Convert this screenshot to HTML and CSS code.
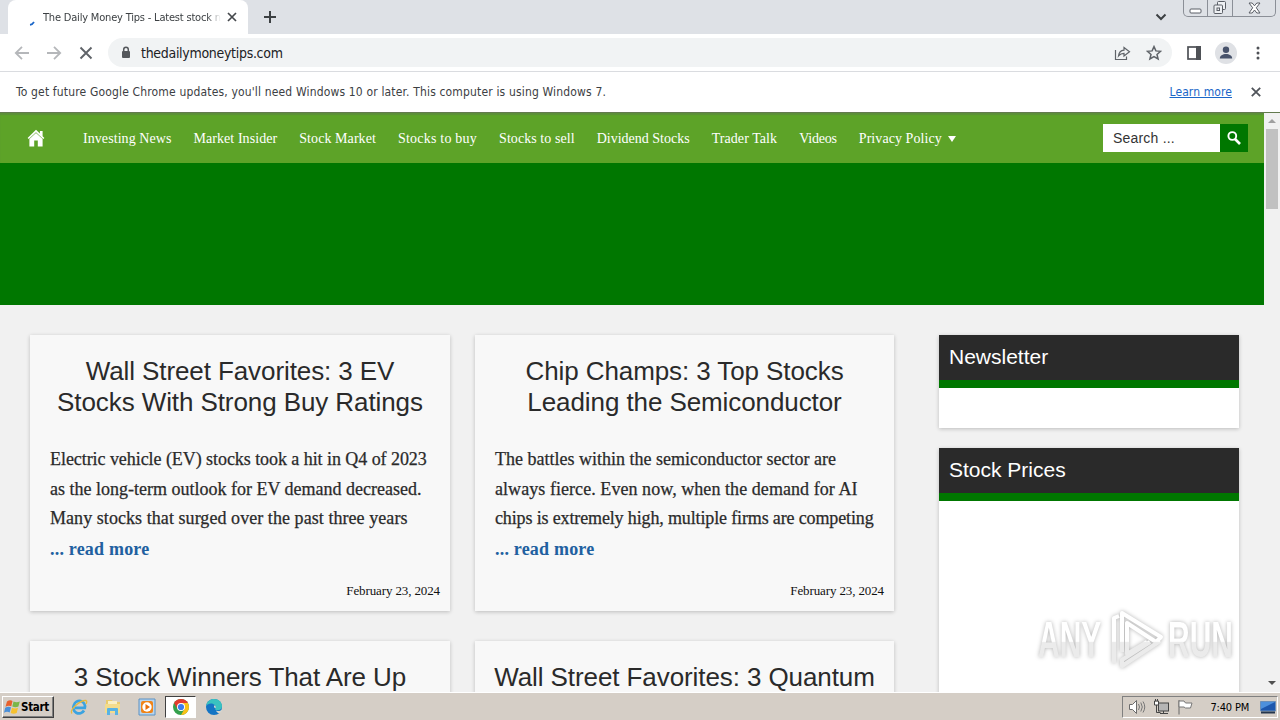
FILE: index.html
```
<!DOCTYPE html>
<html lang="en">
<head>
<meta charset="utf-8">
<title>The Daily Money Tips - Latest stock news</title>
<link rel="stylesheet" href="styles.css">
</head>
<body>
<div class="screen">
    <div class="tabstrip">
        <div class="tab">
            <svg class="spinner" width="16" height="16" viewBox="0 0 16 16"><path d="M6 11.800Q8.500 11.500 10 9" fill="none" stroke="#1a66c8" stroke-width="1.700"/></svg>
            <span class="tab-title">The Daily Money Tips - Latest stock n</span>
            <svg width="10" height="10" viewBox="0 0 10 10"><path d="M1 1l8 8M9 1l-8 8" stroke="#45484c" stroke-width="1.7"/></svg>
        </div>
        <svg class="newtab" width="12" height="12" viewBox="0 0 12 12"><path d="M6 0v12M0 6h12" stroke="#3c4043" stroke-width="2"/></svg>
        <svg class="chevron" width="12" height="8" viewBox="0 0 12 8"><path d="M1.500 1.500L6 6l4.500-4.500" fill="none" stroke="#3c4043" stroke-width="2"/></svg>
        <div class="winbtns">
            <span class="winbtn"><svg width="13" height="6" viewBox="0 0 13 6"><rect x="1" y="1" width="11" height="4" rx="1" fill="#fff" stroke="#5a5e66"/></svg></span>
            <span class="winbtn"><svg width="14" height="14" viewBox="0 0 14 14"><g fill="#eef0f3" stroke="#5a5e66"><rect x="4.500" y=".5" width="8" height="8" rx="1"/><rect x="1" y="4" width="8.500" height="8.500" rx="1"/><rect x="4" y="7" width="2.500" height="2.500"/></g></svg></span>
            <span class="winbtn wide"><svg width="13" height="12" viewBox="0 0 13 12"><path d="M1 1h3.200l2.300 2.800L8.800 1H12L8.300 5.800 12 11H8.800L6.500 8 4.200 11H1l3.700-5.200z" fill="#fff" stroke="#5a5e66"/></svg></span>
        </div>
    </div>
    <div class="toolbar">
        <svg width="16" height="14" viewBox="0 0 16 14"><path d="M15 7H2M8 .8L1.800 7 8 13.200" fill="none" stroke="#b5b7ba" stroke-width="1.800"/></svg>
        <svg width="16" height="14" viewBox="0 0 16 14"><path d="M1 7h13M8 .8L14.200 7 8 13.200" fill="none" stroke="#b5b7ba" stroke-width="1.800"/></svg>
        <svg class="stop" width="14" height="14" viewBox="0 0 14 14"><path d="M1.500 1.500l11 11M12.500 1.500l-11 11" stroke="#5f6368" stroke-width="1.900"/></svg>
        <div class="omnibox">
            <svg width="10" height="13" viewBox="0 0 10 13"><rect x="1" y="5" width="8" height="7" rx="1" fill="#55585c"/><path d="M2.700 5V3.500a2.300 2.300 0 014.600 0V5" fill="none" stroke="#55585c" stroke-width="1.500"/></svg>
            <span class="url">thedailymoneytips.com</span>
            <svg class="share" width="17" height="16" viewBox="0 0 17 16"><path d="M1.500 5v9.500h11V11.500M4.500 11c.5-4 2.500-5.500 5.500-5.800V2.500L15.500 6.800 10 11V8.300c-2.500 0-4 .8-5.500 2.700z" fill="none" stroke="#5f6368" stroke-width="1.200"/></svg>
            <svg width="16" height="16" viewBox="0 0 16 16"><path d="M8 1.600l1.900 4.300 4.700.4-3.600 3.100 1.100 4.600L8 11.600 3.900 14 5 9.400 1.400 6.300l4.700-.4z" fill="none" stroke="#5f6368" stroke-width="1.500"/></svg>
        </div>
        <svg class="panel" width="14" height="14" viewBox="0 0 14 14"><rect x="1" y="1" width="12" height="12" fill="#fff" stroke="#4e5156" stroke-width="1.700"/><path d="M9 0h5v14H9z" fill="#4e5156"/></svg>
        <svg class="avatar" width="22" height="22" viewBox="0 0 22 22"><circle cx="11" cy="11" r="11" fill="#dfe1e5"/><circle cx="11" cy="7.700" r="3.200" fill="#47526b"/><path d="M4.800 16.500c0-3 3-4.500 6.200-4.500s6.200 1.500 6.200 4.500z" fill="#47526b"/></svg>
        <svg width="4" height="14" viewBox="0 0 4 14"><g fill="#4e5156"><circle cx="2" cy="2" r="1.500"/><circle cx="2" cy="7" r="1.500"/><circle cx="2" cy="12" r="1.500"/></g></svg>
    </div>
    <div class="infobar">
        <span class="info-text">To get future Google Chrome updates, you'll need Windows 10 or later. This computer is using Windows 7.</span>
        <a class="learn">Learn more</a>
        <svg width="10" height="10" viewBox="0 0 10 10"><path d="M.8.8l8.400 8.400M9.200.8L.8 9.200" stroke="#50545a" stroke-width="1.800"/></svg>
    </div>
    <div class="viewport">
        <div class="page">
            <div class="nav">
                <svg class="home" width="18" height="18" viewBox="0 0 18 18"><path d="M9 .8L.6 9l1.200 1L9 3.200 16.200 10l1.200-1-1.800-1.800V2h-2.700v2.500z" fill="#fff"/><path d="M2.400 10L9 3.900l6.600 6.100V17.500h-4.800v-6H7.200v6H2.400z" fill="#fff"/></svg>
                <ul class="menu">
                    <li>Investing News</li>
                    <li>Market Insider</li>
                    <li>Stock Market</li>
                    <li>Stocks to buy</li>
                    <li>Stocks to sell</li>
                    <li>Dividend Stocks</li>
                    <li>Trader Talk</li>
                    <li>Videos</li>
                    <li>Privacy Policy <i class="caret"></i></li>
                </ul>
                <div class="search">
                    <span class="search-field">Search ...</span>
                    <span class="search-btn"><svg width="14" height="14" viewBox="0 0 14 14"><circle cx="5.300" cy="5" r="3.900" fill="none" stroke="#fff" stroke-width="1.900"/><path d="M8 8l5 5" stroke="#fff" stroke-width="2.600"/></svg></span>
                </div>
            </div>
            <div class="hero"></div>
            <div class="columns">
                <div class="posts">
                    <div class="post">
                        <h2>Wall Street Favorites: 3 EV<br>Stocks With Strong Buy Ratings</h2>
                        <p class="excerpt"><span class="snug">Electric vehicle (EV) stocks took a hit in Q4 of 2023</span><br>as the long-term outlook for EV demand decreased.<br><span class="loose">Many stocks that surged over the past three years</span></p>
                        <a class="more">... read more</a>
                        <p class="date">February 23, 2024</p>
                    </div>
                    <div class="post">
                        <h2>Chip Champs: 3 Top Stocks<br>Leading the Semiconductor</h2>
                        <p class="excerpt">The battles within the semiconductor sector are<br><span class="loose">always fierce. Even now, when the demand for AI</span><br><span class="tight">chips is extremely high, multiple firms are competing</span></p>
                        <a class="more">... read more</a>
                        <p class="date">February 23, 2024</p>
                    </div>
                    <div class="post">
                        <h2>3 Stock Winners That Are Up</h2>
                    </div>
                    <div class="post">
                        <h2>Wall Street Favorites: 3 Quantum</h2>
                    </div>
                </div>
                <div class="sidebar">
                    <div class="widget newsletter"><h3>Newsletter</h3></div>
                    <div class="widget prices"><h3>Stock Prices</h3></div>
                </div>
            </div>
        </div>
        <div class="scrollbar">
            <i class="arrow-up"></i>
            <div class="thumb"></div>
            <i class="arrow-down"></i>
        </div>
    </div>
    <div class="taskbar">
        <div class="start">
            <svg width="17" height="16" viewBox="0 0 17 16"><path d="M3 2.500Q6 .5 8.500 2L7.300 7.200Q4.500 6 1.500 7.700z" fill="#e8602c"/><path d="M9.500 2.400Q12.500 4 15.800 2.400L14.400 7.600Q11.500 9 8.300 7.500z" fill="#7ab648"/><path d="M1.200 8.800Q4 7.200 7 8.300L5.700 13.500Q3 12 0 13.700z" fill="#4a8fd8"/><path d="M8 8.800Q11 10 14 8.800L12.700 14Q9.500 15.500 6.700 13.900z" fill="#f6c12e"/></svg>
            <span>Start</span>
        </div>
        <div class="quick">
            <svg width="18" height="18" viewBox="0 0 18 18"><path d="M14 12.500A5.500 5.500 0 114 7a5.500 5.500 0 0110.800 2.800H5" fill="none" stroke="#3ba3e0" stroke-width="2.700"/><path d="M2 15.500C-1 12 10 2 16 2.500q1.500.8 0 3.500" fill="none" stroke="#e6b93c" stroke-width="1.300"/></svg>
            <svg width="18" height="18" viewBox="0 0 18 18"><path d="M2 2h6l1 2h7v10H2z" fill="#e9cb6d"/><path d="M4 3h9v5H4z" fill="#f9efc4"/><path d="M1 6h15v9H1z" fill="#f3dc8c"/><path d="M3 17v-6q0-1 1-1h9q1 0 1 1v6h-3v-4H6v4z" fill="#58b3e4"/></svg>
            <svg width="18" height="18" viewBox="0 0 18 18"><path d="M1 1h16v16H1z" fill="#b8d5ee" stroke="#5a92c4"/><rect x="3" y="3" width="12" height="12" rx="2" fill="#f08418"/><circle cx="9" cy="9" r="4.700" fill="#fff"/><path d="M7.500 6l4.500 3-4.500 3z" fill="#e86d08"/></svg>
            <span class="active"><svg width="18" height="18" viewBox="0 0 18 18"><circle cx="9" cy="9" r="8" fill="#34a04c"/><path d="M9 9L2.100 5A8 8 0 0115.900 5z" fill="#e33b2e"/><path d="M9 5h6.900A8 8 0 019 17l3.500-6z" fill="#fbc116"/><path d="M2.100 5L5.500 11 9 5z" fill="#e33b2e"/><circle cx="9" cy="9" r="4" fill="#fff"/><circle cx="9" cy="9" r="3.100" fill="#3b7ded"/></svg></span>
            <svg width="18" height="18" viewBox="0 0 18 18"><circle cx="9" cy="9" r="8" fill="#1474c4"/><path d="M1.200 8C2 3 5.500 1 9 1c5 0 8 3.500 8 7 0 3-2 4.300-4.500 4.300-2 0-3-.8-2-2C11.500 8 9 5.500 6 5.500 4 5.500 2 6.500 1.200 8z" fill="#39c2c0"/><path d="M10.500 10.300c.7-1 .3-2.300-.8-3-1.200.8-1 2.500.8 3zM11 12.500c2 1 4.500.5 5.500-.7l.5 1.200-2 2c-2 .5-3.500-.8-4-2.500z" fill="#d6d6cf"/></svg>
        </div>
        <div class="tray">
            <svg width="18" height="16" viewBox="0 0 18 16"><path d="M1.500 5.500h3l4-4v13l-4-4h-3z" fill="#fff" stroke="#6b6b6b"/><path d="M10.500 5q2 3 0 6M12.800 3.500q3 4.500 0 9M15 2.500q3.500 5.500 0 11" fill="none" stroke="#777"/></svg>
            <svg width="17" height="16" viewBox="0 0 17 16"><rect x="5.500" y="4" width="10" height="8" fill="#b5b5b5" stroke="#444"/><path d="M7 14.500h8M10.500 12v2.500" stroke="#444"/><path d="M2 3h3v3H2z" fill="#fff"/><path d="M1.500 2v4h4V2zM2.500 0v2M4.500 0v2M3.500 6v7.500h4" fill="none" stroke="#444"/></svg>
            <svg width="17" height="16" viewBox="0 0 17 16"><path d="M2 1v14.500" stroke="#666"/><path d="M2 2h5l1.500 2H15l-1.500 5H8.500L7 8H2z" fill="#fff" stroke="#777"/></svg>
            <span class="clock">7:40 PM</span>
            <svg width="16" height="15" viewBox="0 0 16 15"><path d="M.5 1.500h15v9.500H.5z" fill="#1d57ad" stroke="#6b8fb8"/><path d="M1 2h14L1 9z" fill="#4d90dc"/><path d="M1 12.500h14" stroke="#25364d" stroke-width="2"/></svg>
        </div>
    </div>
    <!-- watermark over the desktop -->
    <div class="watermark">
        <span>ANY</span>
        <svg width="58" height="64" viewBox="0 0 58 64">
            <linearGradient id="fade" gradientUnits="userSpaceOnUse" x1="0" y1="0" x2="0" y2="64"><stop offset=".52" stop-color="#fff"/><stop offset=".54" stop-color="#ebebeb"/></linearGradient>
            <path d="M7 55V10l5-2M15 44V5l39 24-5 5L20 15v31l20-12M53 33L15 58v-6l28-18" fill="none" stroke="url(#fade)" stroke-width="4" stroke-linejoin="round"/>
        </svg>
        <span>RUN</span>
    </div>
</div>
</body>
</html>
```
FILE: styles.css
```
body {
    margin: 0;
    font-family: "DejaVu Sans Condensed", "DejaVu Sans", sans-serif;
    font-stretch: condensed;
}

svg {
    display: block;
    flex: none;
}

h2, h3, p, ul {
    margin: 0;
    padding: 0;
    font-weight: normal;
}

.screen {
    position: relative;
    width: 1280px;
    height: 720px;
    overflow: hidden;
    display: flex;
    flex-direction: column;
}

/* browser frame */
.tabstrip {
    height: 34px;
    display: flex;
    align-items: center;
    background: #dee1e6;
    box-sizing: border-box;
    padding: 0 6px 0 8px;
}

.tab {
    width: 240px;
    height: 34px;
    box-sizing: border-box;
    padding: 0 11px 0 16px;
    display: flex;
    align-items: center;
    background: #fff;
    border-radius: 8px 8px 0 0;
}

.spinner {
    margin: 8px 3px 0 0;
}

.tab-title {
    flex: 1;
    margin-right: 6px;
    white-space: nowrap;
    font-size: 11px;
    color: #3c4043;
    letter-spacing: -.19px;
    -webkit-mask-image: linear-gradient(to right, #000 92%, transparent);
    mask-image: linear-gradient(to right, #000 92%, transparent);
}

.newtab {
    margin-left: 16px;
}

.chevron {
    margin-left: auto;
    margin-right: 16px;
}

.winbtns {
    align-self: flex-start;
    display: flex;
    width: 93px;
    height: 17px;
    box-sizing: border-box;
    margin-right: -2px;
    border: 1px solid #8b8f97;
    border-top: 0;
    border-radius: 0 0 5px 5px;
}

.winbtn {
    width: 24px;
    border-right: 1px solid #8b8f97;
    display: flex;
    justify-content: center;
    align-items: center;
}

.winbtn:first-child {
    align-items: flex-end;
    padding-bottom: 2px;
    box-sizing: border-box;
    height: 16px;
}

.wide {
    flex: 1;
    border: 0;
}

.toolbar {
    height: 37px;
    box-sizing: border-box;
    display: flex;
    align-items: center;
    gap: 16px;
    padding: 0 20px 0 14px;
    background: #fff;
}

.stop {
    margin: 0 -1px 0 1px;
}

.omnibox {
    flex: 1;
    height: 29px;
    margin-right: -1px;
    box-sizing: border-box;
    padding: 0 10px 0 13px;
    display: flex;
    align-items: center;
    border-radius: 15px;
    background: #f1f3f4;
}

.url {
    margin-left: 10px;
    font-size: 14px;
    letter-spacing: -.3px;
    color: #202124;
}

.share {
    margin-left: auto;
    margin-right: 15px;
}

.avatar {
    margin: 0 3px 0 -2px;
}

.infobar {
    height: 42px;
    box-sizing: border-box;
    border-top: 1px solid #dadce0;
    border-bottom: 1px solid #637a4e;
    display: flex;
    align-items: center;
    padding: 0 19px 0 16px;
    background: #fff;
    font-size: 12px;
    color: #3c4043;
}

.info-text {
    letter-spacing: .16px;
}

.learn {
    margin-left: auto;
    margin-right: 19px;
    color: #1a66c8;
    text-decoration: underline;
    letter-spacing: .1px;
}

/* site */
.viewport {
    height: 579px;
    display: flex;
}

.page {
    width: 1264px;
    overflow: hidden;
    background: #f1f1f1;
}

.nav {
    height: 50px;
    box-sizing: border-box;
    padding: 0 16px 0 27px;
    display: flex;
    align-items: center;
    background: #5da328;
    box-shadow: inset 0 2px 1px #5c9038;
}

.menu {
    display: flex;
    margin-left: 27px;
    padding-top: 2px;
    list-style: none;
    font: 14px "Liberation Serif", serif;
    letter-spacing: .07px;
    color: #fff;
}

.menu li {
    padding: 0 11px;
    white-space: nowrap;
}

.menu li:nth-child(4) {
    letter-spacing: .22px;
}

.menu li:nth-child(6) {
    letter-spacing: 0;
}

.menu li:nth-child(8) {
    letter-spacing: -.2px;
}

.caret {
    display: inline-block;
    margin-left: 3px;
    border: 4px solid transparent;
    border-top: 6px solid #fff;
    border-bottom: 0;
    vertical-align: 1px;
}

.search {
    margin-left: auto;
    width: 145px;
    height: 28px;
    display: flex;
    font: 14px/28px "Liberation Sans", sans-serif;
}

.search-field {
    flex: 1;
    padding-left: 10px;
    background: #fff;
    color: #333;
    letter-spacing: .2px;
}

.search-btn {
    width: 28px;
    background: #007700;
    display: flex;
    align-items: center;
    justify-content: center;
}

.hero {
    height: 142px;
    background: #007700;
}

.columns {
    display: flex;
    padding: 30px 25px 0 30px;
    gap: 45px;
}

.posts {
    width: 864px;
    display: grid;
    grid-template-columns: 420px 419px;
    grid-auto-rows: 276px;
    gap: 30px 25px;
}

.post {
    box-sizing: border-box;
    padding: 21px 10px 0;
    background: #f8f8f8;
    box-shadow: 0 1px 4px rgba(0, 0, 0, .22);
    font-family: "Liberation Serif", serif;
    white-space: nowrap;
}

.post h2 {
    font: 26px/31px "Liberation Sans", sans-serif;
    letter-spacing: -.09px;
    color: #2a2a2a;
    text-align: center;
}

.excerpt {
    margin: 27px 10px 0;
    font-size: 18px;
    line-height: 29.500px;
    color: #2a2a2a;
    -webkit-text-stroke: .25px #2a2a2a;
}

.snug {
    letter-spacing: -.06px;
}

.tight {
    letter-spacing: -.14px;
}

.loose {
    letter-spacing: .06px;
}

.more {
    display: block;
    margin: 1px 10px 0;
    font-size: 18px;
    line-height: 29px;
    font-weight: bold;
    letter-spacing: .2px;
    color: #2160a0;
}

.date {
    margin-top: 16px;
    font-size: 13px;
    line-height: 22px;
    letter-spacing: -.12px;
    text-align: right;
    color: #111;
}

.sidebar {
    width: 300px;
    display: flex;
    flex-direction: column;
    gap: 20px;
}

.widget {
    background: #fff;
    box-shadow: 0 1px 4px rgba(0, 0, 0, .22);
}

.widget h3 {
    height: 45px;
    border-bottom: 8px solid #007700;
    padding-left: 10px;
    background: #2a2a2a;
    color: #fff;
    font: 21px/44px "Liberation Sans", sans-serif;
}

.newsletter {
    height: 93px;
}

.prices {
    height: 300px;
}

.scrollbar {
    width: 16px;
    box-sizing: border-box;
    padding: 6px 2px 7px;
    display: flex;
    flex-direction: column;
    align-items: center;
    background: #f1f1f1;
}

.arrow-up {
    border: 4px solid transparent;
    border-bottom: 4px solid #a0a0a0;
    border-top: 0;
}

.thumb {
    width: 12px;
    height: 80px;
    margin-top: 6px;
    background: #c1c1c1;
}

.arrow-down {
    margin-top: auto;
    border: 4px solid transparent;
    border-top: 4px solid #505050;
    border-bottom: 0;
}

/* windows taskbar */
.taskbar {
    height: 28px;
    box-sizing: border-box;
    padding: 0 2px;
    display: flex;
    align-items: center;
    background: #d5cec6;
    box-shadow: inset 0 1px #fff;
}

.start {
    width: 52px;
    height: 22px;
    margin-top: 2px;
    box-sizing: border-box;
    border: 1px solid;
    border-color: #fff #404040 #404040 #fff;
    box-shadow: inset -1px -1px #808080;
    display: flex;
    align-items: center;
    padding-left: 1px;
    font-size: 11.500px;
    font-weight: bold;
    color: #000;
    letter-spacing: -.3px;
}

.quick {
    display: flex;
    align-items: center;
    margin: 2px 0 0 16px;
    gap: 16px;
}

.active {
    width: 29px;
    height: 20px;
    margin: 0 -7px;
    border: 1px solid;
    border-color: #404040 #fff #fff #404040;
    background: #fff;
    display: flex;
    align-items: center;
    justify-content: center;
}

.tray {
    margin-left: auto;
    margin-top: 2px;
    width: 156px;
    height: 22px;
    box-sizing: border-box;
    border: 1px solid;
    border-color: #808080 #fff #fff #808080;
    padding: 0 1px 0 5px;
    display: flex;
    align-items: center;
    gap: 7px;
}

.clock {
    margin-left: auto;
    margin-right: 4px;
    font-size: 11px;
    letter-spacing: -.2px;
    color: #000;
    white-space: nowrap;
}

.watermark {
    position: absolute;
    left: 1038px;
    top: 608px;
    height: 64px;
    display: flex;
    align-items: center;
    gap: 3px;
    font: bold 50px/64px "Liberation Sans", sans-serif;
    filter: drop-shadow(0 0 2px rgba(0, 0, 0, .3));
}

.watermark span {
    width: 66px;
    transform: scaleX(.6);
    transform-origin: left;
    white-space: nowrap;
    color: transparent;
    background: linear-gradient(#fff 52%, #ebebeb 54%);
    -webkit-background-clip: text;
    background-clip: text;
    padding-right: 45px;
    margin-right: -45px;
}
```
